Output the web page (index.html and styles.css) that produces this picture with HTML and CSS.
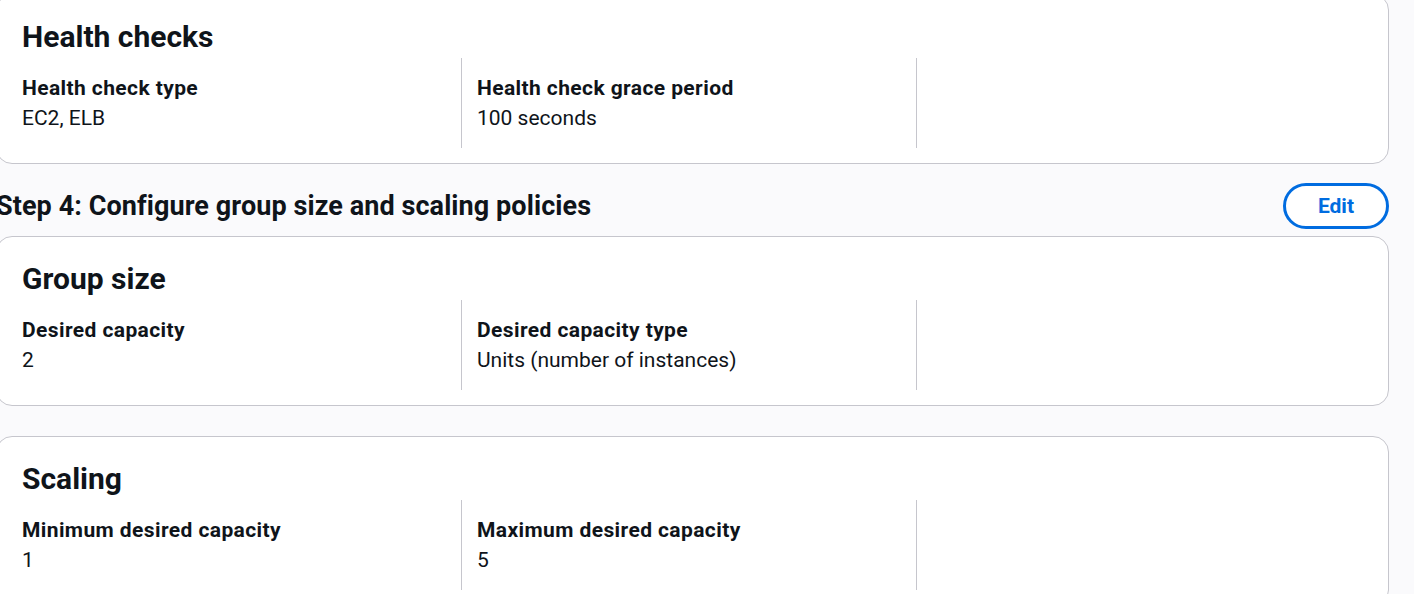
FILE: index.html
```html
<!DOCTYPE html>
<html lang="en">
<head>
<meta charset="utf-8">
<title>Review</title>
<link rel="stylesheet" href="styles.css">
</head>
<body>
<main class="page">
  <section class="card">
    <h2 class="card-title">Health checks</h2>
    <div class="cols">
      <div class="col">
        <div class="label">Health check type</div>
        <div class="value">EC2, ELB</div>
      </div>
      <div class="col">
        <div class="label">Health check grace period</div>
        <div class="value">100 seconds</div>
      </div>
      <div class="col"></div>
    </div>
  </section>

  <div class="step-header">
    <h3 class="step-title">Step 4: Configure group size and scaling policies</h3>
    <button class="btn" type="button">Edit</button>
  </div>

  <section class="card">
    <h2 class="card-title">Group size</h2>
    <div class="cols">
      <div class="col">
        <div class="label">Desired capacity</div>
        <div class="value">2</div>
      </div>
      <div class="col">
        <div class="label">Desired capacity type</div>
        <div class="value">Units (number of instances)</div>
      </div>
      <div class="col"></div>
    </div>
  </section>

  <section class="card card-spaced">
    <h2 class="card-title">Scaling</h2>
    <div class="cols">
      <div class="col">
        <div class="label">Minimum desired capacity</div>
        <div class="value">1</div>
      </div>
      <div class="col">
        <div class="label">Maximum desired capacity</div>
        <div class="value">5</div>
      </div>
      <div class="col"></div>
    </div>
  </section>
</main>
</body>
</html>
```

FILE: styles.css
```css
html {
  overflow: hidden;
}

body {
  margin: 0;
  background: #fafafc;
  color: #0f141a;
  font-family: Roboto, "Liberation Sans", Arial, sans-serif;
}

.page {
  margin: -6px 0 0 -4px;
  width: 1393px;
}

.card {
  box-sizing: border-box;
  background: #ffffff;
  border: 1px solid #c6c6cd;
  border-radius: 16px;
  padding: 24px 17px 15px 25px;
}

.card-spaced {
  margin-top: 30px;
}

.card-title {
  margin: 0 0 3px 0;
  font-size: 30px;
  line-height: 36px;
  font-weight: 700;
}

.cols {
  display: grid;
  grid-template-columns: 439px 455px 455px;
}

.col {
  padding: 15px 0;
  min-height: 60px;
}

.col + .col {
  border-left: 1px solid #c6c6cd;
  padding-left: 15px;
}

.label {
  font-size: 21px;
  line-height: 30px;
  font-weight: 700;
  letter-spacing: 0.4px;
}

.value {
  font-size: 21px;
  line-height: 30px;
  font-weight: 400;
}

.step-header {
  display: flex;
  align-items: center;
  justify-content: space-between;
  padding: 19px 0 7px 0;
}

.step-title {
  margin: 0;
  font-size: 27px;
  line-height: 36px;
  font-weight: 700;
  letter-spacing: 0.08px;
}

.btn {
  box-sizing: border-box;
  height: 46px;
  padding: 0 32px;
  border: 3px solid #006ce0;
  border-radius: 23px;
  background: #ffffff;
  color: #006ce0;
  font-family: Roboto, "Liberation Sans", Arial, sans-serif;
  font-size: 21px;
  line-height: 28px;
  font-weight: 700;
  cursor: pointer;
}
```
